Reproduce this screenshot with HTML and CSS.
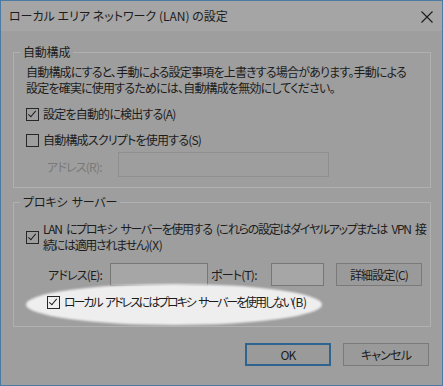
FILE: index.html
```html
<!DOCTYPE html>
<html lang="ja">
<head>
	<meta charset="UTF-8">
	<title>ローカル エリア ネットワーク (LAN) の設定</title>
	<link rel="stylesheet" href="styles.css">
</head>
<body>
	<div class="window">
		<div class="titlebar">
			<span class="title">ローカル エリア ネットワーク (LAN) の設定</span>
			<svg class="close" width="12" height="12" viewBox="0 0 12 12">
				<path d="M0.5 0.5 L11.5 11.5 M11.5 0.5 L0.5 11.5" stroke="#1b1b1b" stroke-width="1.1" fill="none"/>
			</svg>
		</div>
		<div class="content">
			<fieldset class="group auto">
				<legend>自動構成</legend>
				<p class="desc">自動構成にすると、手動による設定事項を上書きする場合があります。手動による<br>設定を確実に使用するためには、自動構成を無効にしてください。</p>
				<div class="check first"><span class="box checked"></span><span>設定を自動的に検出する(A)</span></div>
				<div class="check"><span class="box"></span><span>自動構成スクリプトを使用する(S)</span></div>
				<div class="field disabled">
					<span class="lbl-r">アドレス(R):</span>
					<span class="input wide"></span>
				</div>
			</fieldset>
			<fieldset class="group proxy">
				<legend>プロキシ サーバー</legend>
				<div class="check multi"><span class="box checked"></span><span>LAN にプロキシ サーバーを使用する (これらの設定はダイヤルアップまたは VPN 接<br>続には適用されません)<span class="key">(X)</span></span></div>
				<div class="field">
					<span class="lbl-e">アドレス(E):</span>
					<span class="input addr"></span>
					<span class="lbl-t">ポート(T):</span>
					<span class="input port"></span>
					<span class="btn adv">詳細設定(C)</span>
				</div>
				<div class="check spot"><span class="box checked"></span><span>ローカル アドレスにはプロキシ サーバーを使用しない<span class="key">(B)</span></span></div>
			</fieldset>
			<div class="actions">
				<span class="btn ok">OK</span>
				<span class="btn">キャンセル</span>
			</div>
		</div>
	</div>
</body>
</html>
```

FILE: styles.css
```css
body {
	margin: 0;
	font-family: "Noto Sans CJK JP", "Noto Sans", sans-serif;
	font-size: 12px;
	font-feature-settings: "palt";
	color: #1c1c1c;
}
.window {
	width: 443px;
	height: 386px;
	box-sizing: border-box;
	border: 1px solid #4b7ba4;
	background: #9e9e9e;
	overflow: hidden;
}
.titlebar {
	height: 30px;
	display: flex;
	align-items: center;
	justify-content: space-between;
	padding: 0 9px 0 8px;
	background: #a5a5a5;
}
.title { line-height: 16px; white-space: nowrap; }
.close { margin-top: 1px; }

.content {
	padding: 13px 11px 0 12px;
	letter-spacing: -0.8px;
	word-spacing: 2px;
	white-space: nowrap;
}

.group {
	margin: 0;
	padding: 0 10px 10px 12px;
	border: 1px solid #b0b0b0;
	min-width: 0;
}
.group legend {
	margin-left: -6px;
	padding: 0 3px;
	line-height: 16px;
	letter-spacing: -0.2px;
}
.desc {
	margin: 4px 0 0;
	line-height: 16px;
}
.check {
	display: flex;
	align-items: center;
	line-height: 16px;
	margin-top: 10px;
}
.check .key { letter-spacing: -0.4px; }
.box {
	width: 11px;
	height: 11px;
	border: 1px solid #262626;
	margin-right: 4px;
	flex: none;
	position: relative;
}
.box.checked::after {
	content: "";
	position: absolute;
	left: 3px;
	top: 0px;
	width: 3px;
	height: 7px;
	border: solid #1e1e1e;
	border-width: 0 1px 1px 0;
	transform: rotate(40deg);
}
.field {
	display: flex;
	align-items: center;
	margin-top: 4px;
	padding-left: 21px;
}
.field.disabled { color: #797979; }
.lbl-r { width: 71px; padding-top: 4px; }
.input {
	height: 23px;
	box-sizing: border-box;
	border: 1px solid #777;
	background: #a6a6a6;
	flex: none;
}
.input.wide {
	width: 211px;
	height: 25px;
	border-color: #8f8f8f;
	background: #9e9e9e;
}

.proxy { margin-top: 6px; padding-bottom: 16px; }
.check.multi {
	margin-top: 11px;
	letter-spacing: -1.3px;
	word-spacing: 3px;
}
.proxy .field { margin-top: 10px; padding-left: 22px; }
.lbl-e { width: 62px; flex: none; }
.input.addr { width: 98px; }
.lbl-t { width: 60px; margin-left: 3px; flex: none; }
.input.port { width: 53px; }
.btn {
	display: flex;
	align-items: center;
	justify-content: center;
	width: 86px;
	height: 23px;
	box-sizing: border-box;
	border: 1px solid #7a7a7a;
	background: #9a9a9a;
	flex: none;
}
.btn.adv { margin-left: 12px; }

.check.spot {
	margin-top: 8px;
	padding-left: 21px;
	position: relative;
	z-index: 0;
	letter-spacing: -2.1px;
	word-spacing: 3px;
}
.check.spot::before {
	content: "";
	position: absolute;
	left: 0;
	top: -10px;
	width: 296px;
	height: 41px;
	border-radius: 50%;
	background: #eeeeee;
	filter: blur(1px);
	z-index: -1;
}

.actions {
	display: flex;
	justify-content: flex-end;
	gap: 12px;
	margin-top: 16px;
	padding-right: 2px;
}
.btn.ok {
	border: 2px solid #2f6490;
}
```
